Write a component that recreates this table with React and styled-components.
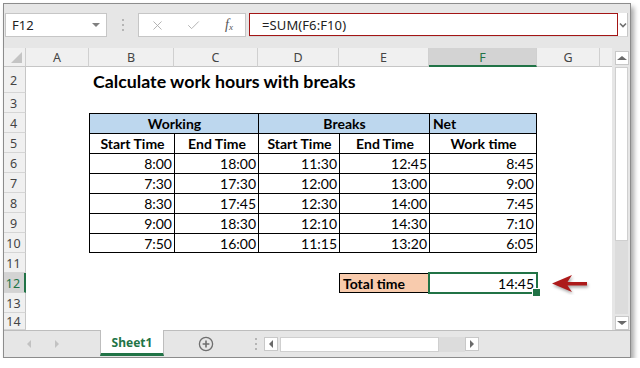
import styled, { createGlobalStyle } from 'styled-components';
import { X, Check } from 'lucide-react';

const GREEN = '#217346';
const CELL_FONT = '"Lato", "Open Sans", sans-serif';
const UI_FONT = '"Noto Sans", "Open Sans", sans-serif';

const GlobalStyle = createGlobalStyle`
  html, body { margin: 0; padding: 0; background: #fff; }
  body { font-family: ${UI_FONT}; }
  * { box-sizing: border-box; }
`;

const COLUMNS = ['A', 'B', 'C', 'D', 'E', 'F', 'G', ''];
const COL_WIDTHS = [22, 63, 85, 84, 81, 90, 108, 63, 12];

// rows of the sheet; each cell: [text, options]
const times = [
    ['8:00', '18:00', '11:30', '12:45', '8:45'],
    ['7:30', '17:30', '12:00', '13:00', '9:00'],
    ['8:30', '17:45', '12:30', '14:00', '7:45'],
    ['9:00', '18:30', '12:10', '14:30', '7:10'],
    ['7:50', '16:00', '11:15', '13:20', '6:05'],
];

function blank(n) {
    return Array.from({ length: n }, () => ({}));
}

const rows = [
    { n: 2, h: 26, cells: [{}, { text: 'Calculate work hours with breaks', title: true, span: 7 }] },
    { n: 3, cells: blank(8) },
    {
        n: 4,
        cells: [
            {},
            { text: 'Working', bold: true, align: 'center', bg: '#bdd7ee', span: 2, edges: 'tl' },
            { text: 'Breaks', bold: true, align: 'center', bg: '#bdd7ee', span: 2, edges: 'tl' },
            { text: 'Net', bold: true, bg: '#bdd7ee', edges: 'tlr' },
            {},
            {},
        ],
    },
    {
        n: 5,
        cells: [
            {},
            ...['Start Time', 'End Time', 'Start Time', 'End Time', 'Work time'].map((t, i) => ({
                text: t,
                bold: true,
                align: 'center',
                edges: i === 4 ? 'tlr' : 'tl',
            })),
            {},
            {},
        ],
    },
    ...times.map((r, ri) => ({
        n: 6 + ri,
        cells: [
            {},
            ...r.map((t, i) => ({
                text: t,
                align: 'right',
                edges: 'tl' + (i === 4 ? 'r' : '') + (ri === 4 ? 'b' : ''),
            })),
            {},
            {},
        ],
    })),
    { n: 11, cells: blank(8) },
    {
        n: 12,
        active: true,
        cells: [
            {},
            {},
            {},
            {},
            { text: 'Total time', bold: true, bg: '#f8cbad', edges: 'tlb' },
            { text: '14:45', align: 'right', selected: true },
            { arrow: true },
            {},
        ],
    },
    { n: 13, cells: blank(8) },
    { n: 14, h: 17, cells: blank(8) },
];

function Arrow() {
    return (
        <svg width="40" height="22" viewBox="0 0 40 22">
            <path
                d="M1 10.5 L21 2 L16.5 9 L36 9 L36 12.5 L16.5 12.5 L21 19 Z"
                fill="#ad1a1a"
                style={{ filter: 'drop-shadow(1.5px 2px 1.5px rgba(0,0,0,0.35))' }}
            />
        </svg>
    );
}

function App() {
    return (
        <>
            <GlobalStyle />
            <Window>
                <FormulaBar>
                    <NameBox>
                        F12
                        <Caret />
                    </NameBox>
                    <Grip>
                        <i />
                        <i />
                        <i />
                    </Grip>
                    <FuncBox>
                        <X size={15} color="#a9a9a9" strokeWidth={1.4} />
                        <Check size={15} color="#a9a9a9" strokeWidth={1.4} />
                        <Fx>
                            f<sub>x</sub>
                        </Fx>
                    </FuncBox>
                    <FormulaBox>
                        <FormulaField>=SUM(F6:F10)</FormulaField>
                        <Chevron viewBox="0 0 8 6" width="8" height="6">
                            <path d="M1 1.5 L4 4.5 L7 1.5" stroke="#707070" strokeWidth="1.6" fill="none" />
                        </Chevron>
                    </FormulaBox>
                </FormulaBar>

                <Body>
                    <Sheet>
                        <Corner />
                        {COLUMNS.map((c, i) => (
                            <ColHead key={i} $active={c === 'F'} $last={c === ''}>
                                {c}
                            </ColHead>
                        ))}
                        {rows.map((row) => [
                            <RowHead key={`h${row.n}`} $active={row.active}>
                                {row.n}
                            </RowHead>,
                            ...row.cells.map((cell, i) =>
                                cell.title ? (
                                    <Title key={`${row.n}-${i}`} $span={cell.span}>
                                        {cell.text}
                                    </Title>
                                ) : (
                                    <Cell
                                        key={`${row.n}-${i}`}
                                        $span={cell.span}
                                        $align={cell.align}
                                        $bold={cell.bold}
                                        $bg={cell.bg}
                                        $edges={cell.edges || ''}
                                        $selected={cell.selected}
                                    >
                                        {cell.arrow ? <Arrow /> : cell.text}
                                    </Cell>
                                )
                            ),
                        ])}
                    </Sheet>
                    <VScroll>
                        <ScrollBtn>
                            <Tri $dir="up" />
                        </ScrollBtn>
                        <VThumb />
                        <VTrack />
                        <ScrollBtn>
                            <Tri $dir="down" />
                        </ScrollBtn>
                    </VScroll>
                </Body>

                <TabBar>
                    <TabNav>
                        <Tri $dir="left" $light />
                        <Tri $dir="right" $light />
                    </TabNav>
                    <SheetTab>Sheet1</SheetTab>
                    <AddSheet>
                        <svg width="16" height="16" viewBox="0 0 16 16">
                            <circle cx="8" cy="8" r="6.6" stroke="#6f6f6f" strokeWidth="1.3" fill="none" />
                            <path d="M8 4.6 V11.4 M4.6 8 H11.4" stroke="#6f6f6f" strokeWidth="1.6" />
                        </svg>
                    </AddSheet>
                    <Grip $small>
                        <i />
                        <i />
                        <i />
                    </Grip>
                    <HScroll>
                        <ScrollBtn>
                            <Tri $dir="left" />
                        </ScrollBtn>
                        <HThumb />
                        <HTrack />
                        <ScrollBtn>
                            <Tri $dir="right" />
                        </ScrollBtn>
                    </HScroll>
                </TabBar>
            </Window>
        </>
    );
}

const Window = styled.div`
    margin: 3px 0 0 3px;
    width: 628px;
    height: 355px;
    border: 1px solid #8c8c8c;
    background: #e6e6e6;
    box-shadow: 3px 4px 5px rgba(0, 0, 0, 0.35);
    display: flex;
    flex-direction: column;
    overflow: hidden;
`;

const FormulaBar = styled.div`
    height: 44px;
    display: flex;
    align-items: flex-start;
    padding: 9px 0 0 1px;
    font-size: 13px;
    color: #222;
`;

const NameBox = styled.div`
    width: 102px;
    height: 24px;
    background: #fff;
    border: 1px solid #c6c6c6;
    display: flex;
    align-items: center;
    justify-content: space-between;
    padding: 0 6px 0 6px;
`;

const Caret = styled.span`
    width: 0;
    height: 0;
    border-left: 4px solid transparent;
    border-right: 4px solid transparent;
    border-top: 4px solid #808080;
`;

const Grip = styled.div`
    width: ${(p) => (p.$small ? '16px' : '31px')};
    height: ${(p) => (p.$small ? '100%' : '24px')};
    display: flex;
    flex-direction: column;
    align-items: center;
    justify-content: center;
    gap: 3px;

    i {
        width: 2px;
        height: 2px;
        background: #b5b5b5;
    }
`;

const FuncBox = styled.div`
    width: 108px;
    height: 24px;
    background: #fff;
    border: 1px solid #c6c6c6;
    display: flex;
    align-items: center;
    padding: 0 0 0 11px;
    gap: 21px;
`;

const Fx = styled.span`
    font-family: 'Liberation Serif', serif;
    font-style: italic;
    font-size: 14px;
    color: #555;
    margin-left: 3px;

    sub {
        font-size: 9px;
        vertical-align: -1px;
    }
`;

const FormulaBox = styled.div`
    margin-left: 3px;
    width: 379px;
    height: 24px;
    background: #fff;
    border-right: 1px solid #c6c6c6;
    border-bottom: 1px solid #d6d6d6;
    display: flex;
    align-items: center;
`;

const FormulaField = styled.div`
    width: 369px;
    height: 23px;
    border: 1px solid #a31515;
    display: flex;
    align-items: center;
    padding-left: 12px;
    letter-spacing: 0.1px;
`;

const Chevron = styled.svg`
    margin-left: 1px;
`;

const Body = styled.div`
    display: flex;
    height: 282px;
`;

const Sheet = styled.div`
    width: 608px;
    background: #fff;
    display: grid;
    grid-template-columns: ${COL_WIDTHS.map((w) => w + 'px').join(' ')};
    grid-template-rows: 19px 26px repeat(11, 20px) 17px;
    overflow: hidden;
`;

const Corner = styled.div`
    background: #f0f0f0;
    border-right: 1px solid #cdcdcd;
    border-bottom: 1px solid #c6c6c6;
    position: relative;

    &::after {
        content: '';
        position: absolute;
        right: 3px;
        bottom: 3px;
        border-left: 11px solid transparent;
        border-bottom: 11px solid #c4c4c4;
    }
`;

const ColHead = styled.div`
    background: ${(p) => (p.$active ? '#d3d3d3' : '#f0f0f0')};
    color: ${(p) => (p.$active ? GREEN : '#444')};
    border-right: ${(p) => (p.$last ? 'none' : '1px solid #d0d0d0')};
    border-bottom: ${(p) => (p.$active ? `2px solid ${GREEN}` : '1px solid #c6c6c6')};
    font-size: 12.5px;
    display: flex;
    align-items: center;
    justify-content: center;
    padding-top: 1px;
`;

const RowHead = styled.div`
    background: ${(p) => (p.$active ? '#d3d3d3' : '#f0f0f0')};
    color: ${(p) => (p.$active ? GREEN : '#444')};
    border-right: ${(p) => (p.$active ? `2px solid ${GREEN}` : '1px solid #c6c6c6')};
    border-bottom: 1px solid #d5d5d5;
    font-size: 12.5px;
    display: flex;
    align-items: center;
    justify-content: center;
    padding: 1px 2px 0 0;
`;

const Title = styled.div`
    grid-column: span ${(p) => p.$span || 1};
    font-family: ${CELL_FONT};
    font-weight: 700;
    font-size: 17.8px;
    color: #000;
    display: flex;
    align-items: center;
    padding: 2px 0 0 4px;
    white-space: nowrap;
`;

const ALIGN = { left: 'flex-start', center: 'center', right: 'flex-end' };
const LINE = '1px solid #000';

const Cell = styled.div`
    grid-column: span ${(p) => p.$span || 1};
    position: relative;
    display: flex;
    align-items: center;
    justify-content: ${(p) => ALIGN[p.$align || 'left']};
    padding: 0 2px 0 3px;
    font-family: ${CELL_FONT};
    font-size: 14px;
    font-weight: ${(p) => (p.$bold ? 700 : 400)};
    color: #000;
    white-space: nowrap;
    background: ${(p) => p.$bg || 'transparent'};
    border-top: ${(p) => (p.$edges.includes('t') ? LINE : 'none')};
    border-left: ${(p) => (p.$edges.includes('l') ? LINE : 'none')};
    border-right: ${(p) => (p.$edges.includes('r') ? LINE : 'none')};
    border-bottom: ${(p) => (p.$edges.includes('b') ? LINE : 'none')};

    ${(p) =>
        p.$selected &&
        `
        outline: 2px solid ${GREEN};
        outline-offset: -1px;
        padding-right: 3px;
        &::after {
            content: '';
            position: absolute;
            right: -4px;
            bottom: -4px;
            width: 7px;
            height: 7px;
            background: ${GREEN};
            border: 1px solid #fff;
            z-index: 2;
        }
    `}

    svg {
        margin-left: 11px;
        margin-top: 1px;
    }
`;

const VScroll = styled.div`
    width: 18px;
    display: flex;
    flex-direction: column;
    padding: 3px 2px 0 3px;
    background: #e6e6e6;
`;

const ScrollBtn = styled.div`
    width: 14px;
    height: 14px;
    flex: none;
    background: #fff;
    border: 1px solid #c8c8c8;
    display: flex;
    align-items: center;
    justify-content: center;
`;

const VThumb = styled.div`
    margin-top: 2px;
    height: 174px;
    background: #fff;
    border: 1px solid #cfcfcf;
`;

const VTrack = styled.div`
    flex: 1;
    background: #dcdcdc;
    margin-bottom: 2px;
`;

const Tri = styled.span`
    width: 0;
    height: 0;
    border: 4px solid transparent;
    ${(p) => {
        const c = p.$light ? '#c2c2c2' : '#6a6a6a';
        if (p.$dir === 'up') return `border-bottom-color: ${c}; border-top-width: 0; border-left-width: 5px; border-right-width: 5px;`;
        if (p.$dir === 'down') return `border-top-color: ${c}; border-bottom-width: 0; border-left-width: 5px; border-right-width: 5px;`;
        if (p.$dir === 'left') return `border-right-color: ${c}; border-left-width: 0; border-top-width: 4.5px; border-bottom-width: 4.5px;`;
        return `border-left-color: ${c}; border-right-width: 0; border-top-width: 4.5px; border-bottom-width: 4.5px;`;
    }}
`;

const TabBar = styled.div`
    flex: 1;
    display: flex;
    border-top: 1px solid #bdbdbd;
    background: #e6e6e6;
`;

const TabNav = styled.div`
    width: 96px;
    display: flex;
    align-items: center;
    padding-left: 23px;
    gap: 24px;
`;

const SheetTab = styled.div`
    width: 64px;
    height: 26px;
    margin-top: -1px;
    background: #fff;
    border-left: 1px solid #bdbdbd;
    border-right: 1px solid #bdbdbd;
    border-bottom: 3px solid ${GREEN};
    color: ${GREEN};
    font-weight: 700;
    font-size: 12px;
    display: flex;
    align-items: center;
    justify-content: center;
    padding-top: 2px;
`;

const AddSheet = styled.div`
    width: 84px;
    display: flex;
    align-items: center;
    padding-left: 34px;
`;

const HScroll = styled.div`
    width: 215px;
    height: 15px;
    margin: 6px 0 0 0;
    display: flex;
`;

const HThumb = styled.div`
    margin-left: 2px;
    width: 159px;
    background: #fff;
    border: 1px solid #cfcfcf;
`;

const HTrack = styled.div`
    flex: 1;
    background: #dcdcdc;
`;

export default App;
